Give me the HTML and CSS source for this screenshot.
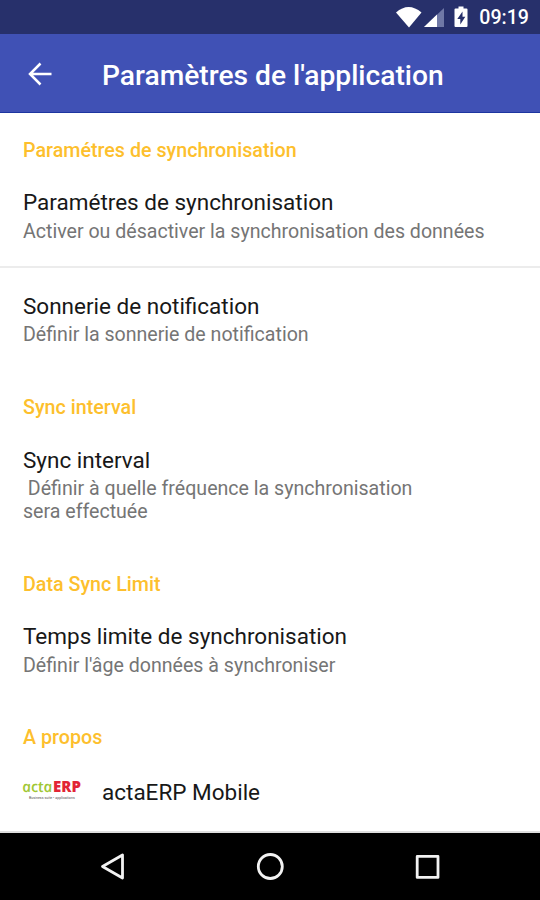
FILE: index.html
```
<!DOCTYPE html>
<html lang="fr">
<head>
<meta charset="utf-8">
<title>Paramètres de l'application</title>
<link rel="stylesheet" href="styles.css">
</head>
<body>
<div class="screen">
  <div class="status">
    <svg class="status-icons" width="76" height="34" viewBox="0 0 76 34">
      <path fill="#fff" d="M0 12.5Q12.500 1.500 25.500 12.500L13 27.500Z"/>
      <path fill="#6f78a6" d="M48 8V27H28Z"/>
      <path fill="#fff" d="M41 14.500V27H28Z"/>
      <path fill="#fff" d="M62.500 6.500h5v2h3q1 0 1 1v16.500q0 1-1 1h-11q-1 0-1-1V9.500q0-1 1-1h3z"/>
      <path fill="#27306b" d="M66.500 11.500L61.300 19h3v5.500l5-7.800h-2.800z"/>
    </svg>
    <span class="clock">09:19</span>
  </div>
  <header class="appbar">
    <svg class="back" width="24" height="24" viewBox="0 0 24 24"><path fill="none" stroke="#fff" stroke-width="2.500" d="M23.500 12H2.500M12.500 1.500L2 12L12.500 22.500"/></svg>
    <h1>Paramètres de l'application</h1>
  </header>
  <main class="list">
    <h2 class="category">Paramétres de synchronisation</h2>
    <div class="item first">
      <div class="title">Paramétres de synchronisation</div>
      <div class="summary">Activer ou désactiver la synchronisation des données</div>
    </div>
    <div class="item divided">
      <div class="title">Sonnerie de notification</div>
      <div class="summary">Définir la sonnerie de notification</div>
    </div>
    <h2 class="category">Sync interval</h2>
    <div class="item">
      <div class="title">Sync interval</div>
      <div class="summary">&nbsp;Définir à quelle fréquence la synchronisation<br>sera effectuée</div>
    </div>
    <h2 class="category">Data Sync Limit</h2>
    <div class="item">
      <div class="title">Temps limite de synchronisation</div>
      <div class="summary">Définir l'âge données à synchroniser</div>
    </div>
    <h2 class="category">A propos</h2>
    <div class="about">
      <div class="logo">
        <div class="wordmark"><span class="acta">acta</span><span class="erp">ERP</span></div>
        <div class="tagline">Business suite • applications</div>
      </div>
      <div class="title">actaERP Mobile</div>
    </div>
  </main>
  <nav class="navbar">
    <svg width="540" height="67" viewBox="0 0 540 67" fill="none" stroke="#f2f2f2" stroke-width="2.800" stroke-linejoin="round">
      <path d="M122.500 22V45L102.500 33.500Z"/>
      <circle cx="270.300" cy="33.500" r="12"/>
      <rect x="417.200" y="23.400" width="20.800" height="21"/>
    </svg>
  </nav>
</div>
</body>
</html>
```
FILE: styles.css
```
* { box-sizing: border-box; }
body {
  margin: 0;
  background: #fff;
  font-family: Roboto, "Liberation Sans", sans-serif;
}
.screen {
  width: 540px;
  height: 900px;
  display: flex;
  flex-direction: column;
  overflow: hidden;
}
.status {
  height: 34px;
  flex: none;
  background: #27306b;
  display: flex;
  align-items: center;
  justify-content: flex-end;
  padding-right: 11px;
}
.status-icons { margin-right: 7px; }
.clock {
  color: #fff;
  font-size: 19.6px;
  font-weight: 500;
  line-height: 24px;
  padding-top: 2px;
}
.appbar {
  height: 79px;
  flex: none;
  background: #4051b5;
  border-bottom: 1px solid #1d35a0;
  display: flex;
  align-items: center;
  padding: 2px 0 0 28px;
}
.appbar h1 {
  margin: 3px 0 0 50px;
  color: #fff;
  font-size: 28.2px;
  font-weight: 500;
  line-height: 34px;
  white-space: nowrap;
}
.list { flex: 1; border-bottom: 2px solid #dedede; }
.category {
  margin: 0;
  padding: 26px 23px 12.4px;
  color: #fdbf2d;
  font-size: 19.7px;
  font-weight: 500;
  line-height: 24px;
}
.item { padding: 14px 23px 23.6px; }
.item.first { padding-bottom: 23px; }
.item.divided { border-top: 2px solid #ececec; padding-top: 25.2px; }
.title {
  color: #181818;
  font-size: 22.5px;
  line-height: 26px;
  white-space: nowrap;
}
.summary {
  margin-top: 4.6px;
  color: #757575;
  font-size: 19.58px;
  line-height: 23px;
  white-space: nowrap;
}
.divided .summary { margin-top: 4px; margin-bottom: .4px; }
.about {
  display: flex;
  align-items: center;
  padding: 16px 22px 0;
}
.logo { width: 80px; padding-bottom: 3px; }
.wordmark {
  display: flex;
  align-items: baseline;
  height: 17px;
  font-family: "Open Sans", sans-serif;
  line-height: 14px;
  white-space: nowrap;
}
.acta {
  color: #a1c735;
  font-size: 15px;
  font-style: italic;
  font-weight: 600;
  width: 31px;
  transform: skewX(10deg);
}
.erp { color: #e22435; font-size: 15px; font-weight: 800; }
.tagline {
  padding-left: 7px;
  color: #555;
  font-size: 3.6px;
  line-height: 5px;
}
.navbar { height: 67px; flex: none; background: #000; }
.navbar svg { display: block; }
```
